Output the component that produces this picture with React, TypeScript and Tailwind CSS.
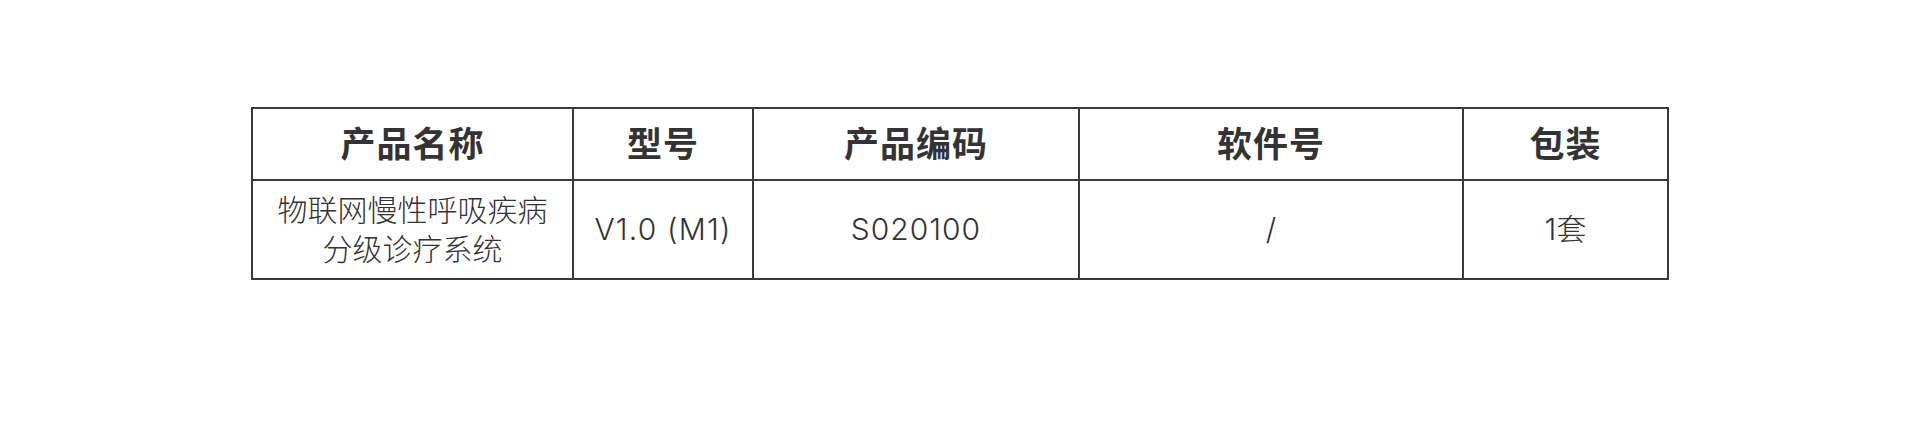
const headers = ["产品名称", "型号", "产品编码", "软件号", "包装"];
const widths = ["w-[321px]", "w-[180px]", "w-[326px]", "w-[384px]", "w-[205px]"];

const App = () => {
  return (
    <div
      className="w-full h-[422px] bg-white pt-[107px]"
      style={{ fontFamily: 'Inter, "Noto Sans CJK SC", sans-serif' }}
    >
      <table className="mx-auto w-[1416px] table-fixed border-collapse border-2 border-[#3a3a3a] text-[#333333]">
        <thead>
          <tr className="h-[72px]">
            {headers.map((h, i) => (
              <th
                key={h}
                className={`${widths[i]} border-2 border-[#3a3a3a] text-center align-middle text-[35px] font-bold tracking-[1px] leading-none`}
              >
                {h}
              </th>
            ))}
          </tr>
        </thead>
        <tbody>
          <tr className="h-[99px] text-[30px] font-light">
            <td className="border-2 border-[#3a3a3a] text-center align-middle leading-[39px]">
              物联网慢性呼吸疾病
              <br />
              分级诊疗系统
            </td>
            <td className="border-2 border-[#3a3a3a] text-center align-middle tracking-[1.2px]">V1.0 (M1)</td>
            <td className="border-2 border-[#3a3a3a] text-center align-middle tracking-[1px]">S020100</td>
            <td className="border-2 border-[#3a3a3a] text-center align-middle">/</td>
            <td className="border-2 border-[#3a3a3a] text-center align-middle">1套</td>
          </tr>
        </tbody>
      </table>
    </div>
  );
};

export default App;
